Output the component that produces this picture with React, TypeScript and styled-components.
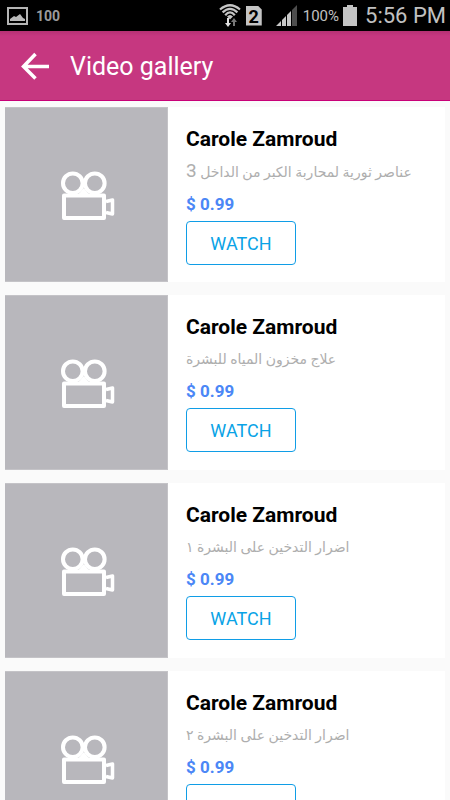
import React from "react";
import styled, { createGlobalStyle } from "styled-components";

const GlobalStyle = createGlobalStyle`
  * { box-sizing: border-box; }
  body {
    margin: 0;
    background: #fafafa;
    font-family: Roboto, "DejaVu Sans", sans-serif;
  }
`;

const Screen = styled.div`
  height: 100vh;
  display: flex;
  flex-direction: column;
  overflow: hidden;
`;

const StatusBar = styled.div`
  flex: none;
  height: 31px;
  padding: 0 4px 0 7px;
  background: #000;
  color: #c1c1c1;
  display: flex;
  align-items: center;
  justify-content: space-between;
`;

const StatusGroup = styled.div`
  display: flex;
  align-items: center;
`;

const BatteryAlert = styled.span`
  margin-left: 8px;
  font-size: 14px;
  font-weight: 700;
  line-height: 30px;
  color: #9b9b9b;
`;

const BatteryLevel = styled.span`
  margin: 0 4px 0 6px;
  font-size: 15px;
  line-height: 30px;
`;

const Clock = styled.time`
  margin-left: 8px;
  font-size: 22px;
  line-height: 30px;
  white-space: nowrap;
`;

const AppBar = styled.header`
  flex: none;
  height: 70px;
  padding-left: 18px;
  display: flex;
  align-items: center;
  background: linear-gradient(#b53074, #c63780 5px);
  border-bottom: 1px solid #c80078;
`;

const BackButton = styled.button`
  width: 34px;
  height: 34px;
  padding: 0;
  border: 0;
  background: none;
  display: flex;
  align-items: center;
  justify-content: center;
`;

const ScreenTitle = styled.h1`
  margin: 2px 0 0 18px;
  color: #fff;
  font-size: 25px;
  line-height: 32px;
  font-weight: 400;
`;

const VideoList = styled.main`
  flex: 1;
  min-height: 0;
  overflow: hidden;
  padding: 6px 5px 0;
  display: flex;
  flex-direction: column;
  gap: 13px;
`;

const Card = styled.article`
  flex: none;
  height: 175px;
  display: flex;
  background: #fff;
`;

const Thumbnail = styled.div`
  flex: none;
  width: 163px;
  display: flex;
  align-items: center;
  justify-content: center;
  padding-left: 4px;
  background: #b8b7bc;
  border: 1px solid #c4c3c7;
  border-left: 0;
`;

const Details = styled.div`
  flex: 1;
  min-width: 0;
  padding: 17px 18px 0;
  display: flex;
  flex-direction: column;
  align-items: flex-start;
`;

const Name = styled.h2`
  margin: 0;
  color: #000;
  font-size: 21px;
  line-height: 30px;
  font-weight: 700;
`;

const Description = styled.p`
  margin: 5px 0 3px;
  color: #aeaeae;
  font-size: 14px;
  line-height: 24px;
  white-space: nowrap;
`;

const Numeral = styled.span`
  font-size: 19px;
`;

const Price = styled.p`
  margin: 0;
  color: #4b87f6;
  font-size: 17px;
  line-height: 34px;
  font-weight: 700;
`;

const WatchButton = styled.button`
  width: 110px;
  height: 44px;
  padding: 0;
  border: 1px solid #109de6;
  border-radius: 4px;
  background: #fff;
  color: #0aa3e6;
  font-family: inherit;
  font-size: 18px;
  font-weight: 400;
`;

function PictureIcon() {
  return (
    <svg width="21" height="18" viewBox="0 0 21 18" aria-hidden="true">
      <path d="M1 1h19v16H1z" fill="none" stroke="#b5b5b5" strokeWidth="2" />
      <path d="M3 14v-2l4-3 2 1 4-3 3 4 2 1v2z" fill="#bababa" />
    </svg>
  );
}

function WifiIcon() {
  return (
    <svg width="22" height="24" viewBox="0 0 22 24" aria-hidden="true">
      <g fill="none" stroke="#c5c5c5" strokeWidth="2.2">
        <path d="M1 5.5Q11-3 21 5.5M3.6 8.4Q11 1.4 18.4 8.4M6.2 11.2Q11 5.6 15.8 11.2" />
      </g>
      <path d="M8 12.6Q11 9.4 14 12.6L11 15.4z" fill="#c5c5c5" />
      <path d="M8 14h2v5h2l-3 4-3-4h2z" fill="#e0e0e0" />
      <path d="M14 22v-4h-2l3-4 3 4h-2v4z" fill="#777" />
    </svg>
  );
}

const SimCard = styled.span`
  width: 16px;
  height: 20px;
  margin: 0 14px 0 5px;
  background: #c4c4c4;
  clip-path: polygon(0 0, 12px 0, 100% 4px, 100% 100%, 0 100%);
  color: #000;
  font-size: 18px;
  font-weight: 700;
  line-height: 21px;
  text-align: center;
`;

function SignalIcon() {
  return (
    <svg width="21" height="21" viewBox="0 0 21 21" aria-hidden="true">
      <path d="M0 21l5-5v5zM6 21v-6l4-4v10zM11 21V10l4-4v15z" fill="#c8c8c8" />
      <path d="M16 21V5l5-5v21z" fill="#4d4d4d" />
    </svg>
  );
}

function BatteryIcon() {
  return (
    <svg width="14" height="21" viewBox="0 0 14 21" aria-hidden="true">
      <path d="M4 0h6v2h4v19H0V2h4z" fill="#c4c4c4" />
    </svg>
  );
}

function BackIcon() {
  return (
    <svg width="30" height="30" viewBox="0 0 30 30" aria-hidden="true">
      <path d="M15.5 3L3.5 15.5l12 12M3.5 15.5H29" fill="none" stroke="#fff" strokeWidth="3.5" />
    </svg>
  );
}

function CameraIcon() {
  return (
    <svg width="56" height="52" viewBox="0 0 56 52" aria-hidden="true">
      <g fill="none" stroke="#fff" strokeWidth="4" strokeLinejoin="round">
        <circle cx="12.8" cy="14.2" r="9.8" />
        <circle cx="34.8" cy="14.2" r="9.8" />
        <path d="M4 26.5h40V49H4z" />
      </g>
      <path d="M23.8 19l6 7h-12z" fill="#fff" />
      <path
        d="M46 32.5l6.5-1.5v14L46 43.5"
        fill="none"
        stroke="#fff"
        strokeWidth="3.5"
        strokeLinejoin="round"
      />
    </svg>
  );
}

type Video = { name: string; description: string; numeral?: string; price: string };

const videos: Video[] = [
  { name: "Carole Zamroud", description: "عناصر ثورية لمحاربة الكبر من الداخل ", numeral: "3", price: "$ 0.99" },
  { name: "Carole Zamroud", description: "علاج مخزون المياه للبشرة", price: "$ 0.99" },
  { name: "Carole Zamroud", description: "اضرار التدخين على البشرة ١", price: "$ 0.99" },
  { name: "Carole Zamroud", description: "اضرار التدخين على البشرة ٢", price: "$ 0.99" },
];

export default function App() {
  return (
    <Screen>
      <GlobalStyle />
      <StatusBar>
        <StatusGroup>
          <PictureIcon />
          <BatteryAlert>100</BatteryAlert>
        </StatusGroup>
        <StatusGroup>
          <WifiIcon />
          <SimCard>2</SimCard>
          <SignalIcon />
          <BatteryLevel>100%</BatteryLevel>
          <BatteryIcon />
          <Clock>5:56 PM</Clock>
        </StatusGroup>
      </StatusBar>
      <AppBar>
        <BackButton type="button" aria-label="Back">
          <BackIcon />
        </BackButton>
        <ScreenTitle>Video gallery</ScreenTitle>
      </AppBar>
      <VideoList>
        {videos.map((video, index) => (
          <Card key={index}>
            <Thumbnail>
              <CameraIcon />
            </Thumbnail>
            <Details>
              <Name>{video.name}</Name>
              <Description dir="rtl" lang="ar">
                {video.description}
                {video.numeral && <Numeral>{video.numeral}</Numeral>}
              </Description>
              <Price>{video.price}</Price>
              <WatchButton type="button">WATCH</WatchButton>
            </Details>
          </Card>
        ))}
      </VideoList>
    </Screen>
  );
}
